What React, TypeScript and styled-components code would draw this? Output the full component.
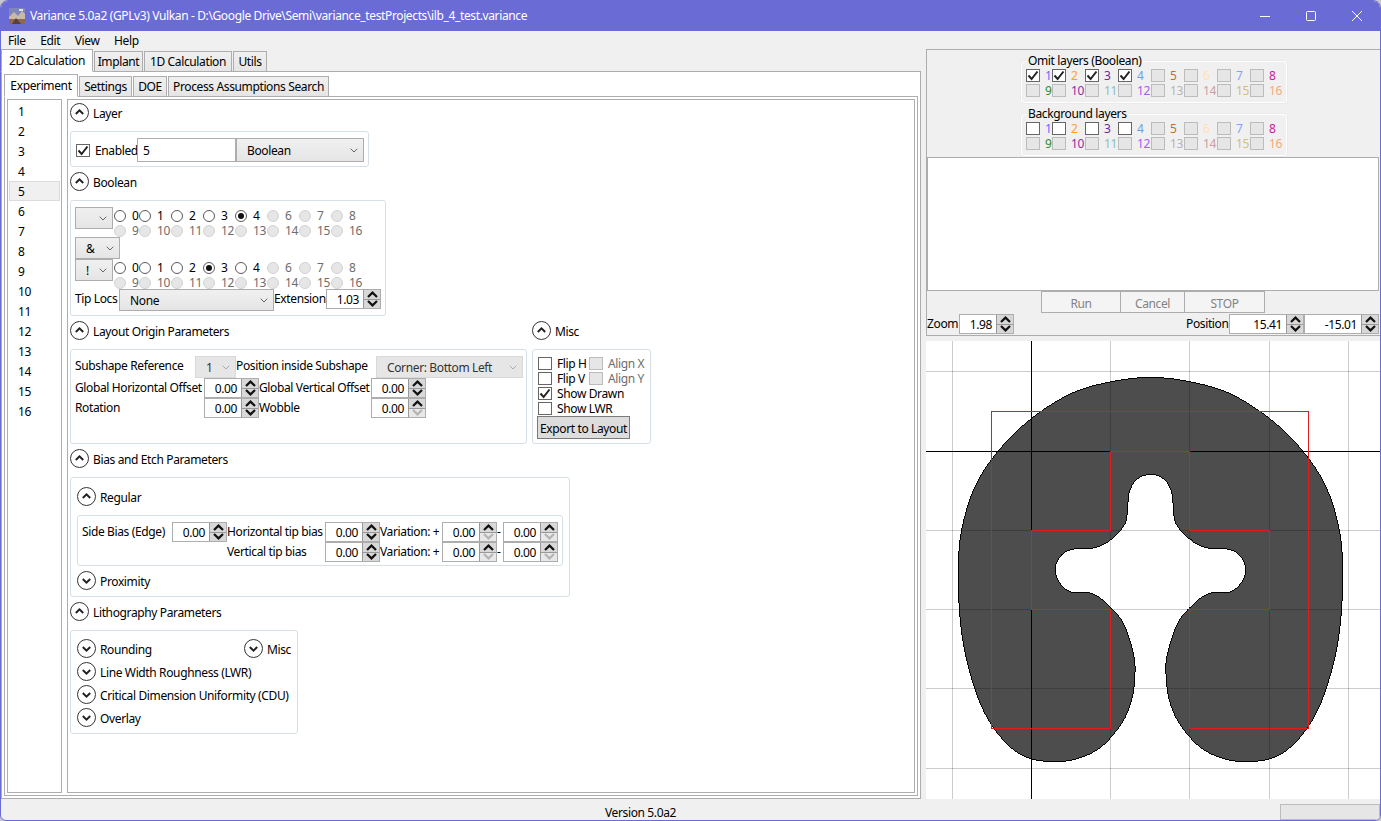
import React from "react";
import styled, { createGlobalStyle } from "styled-components";

const GlobalStyle = createGlobalStyle`
  html, body {
    margin: 0;
    padding: 0;
    background: #c8c8c8;
  }
  * {
    box-sizing: border-box;
  }
`;

const line = "#adadad";
const groupLine = "#d5dfe5";
const face = "#f0f0f0";
const disabledFace = "#e6e6e6";
const muted = "#6d6d6d";

const Window = styled.div`
  width: 1381px;
  height: 821px;
  display: flex;
  flex-direction: column;
  overflow: hidden;
  border: 1px solid #6b6bd6;
  border-radius: 8px 8px 6px 6px;
  background: ${face};
  color: #000;
  font-family: "Noto Sans", "Open Sans", sans-serif;
  font-size: 12px;
  line-height: 15px;
  letter-spacing: -0.37px;
`;

const TitleBar = styled.div`
  height: 30px;
  flex: none;
  display: flex;
  align-items: center;
  padding-left: 8px;
  background: #6b6bd6;
  color: #fff;
`;

const TitleText = styled.span`
  margin: 0 0 1px 5px;
`;

const WindowButtons = styled.div`
  margin-left: auto;
  display: flex;
  height: 100%;
`;

const WindowButton = styled.div`
  width: 46px;
  display: flex;
  align-items: center;
  justify-content: center;
`;

const MenuBar = styled.div`
  height: 18px;
  flex: none;
  display: flex;
  align-items: center;
  gap: 14.5px;
  padding-left: 7px;
`;

const Main = styled.div`
  height: 750px;
  flex: none;
  display: flex;
`;

const LeftColumn = styled.div`
  width: 925px;
  flex: none;
  display: flex;
  flex-direction: column;
  padding-right: 5px;
`;

const TabStrip = styled.div`
  height: 22px;
  flex: none;
  display: flex;
  align-items: flex-end;
  gap: 1px;
  position: relative;
  z-index: 1;
`;

const Tab = styled.div<{ $active?: boolean; $width: number }>`
  width: ${(p) => p.$width}px;
  height: ${(p) => (p.$active ? 23 : 21)}px;
  margin-bottom: -1px;
  display: flex;
  align-items: center;
  justify-content: center;
  border: 1px solid ${line};
  border-bottom-color: ${(p) => (p.$active ? "#fff" : line)};
  background: ${(p) => (p.$active ? "#fff" : "linear-gradient(#f0f0f0, #e5e5e5)")};
`;

const TabBody = styled.div`
  flex: 1;
  min-height: 0;
  display: flex;
  flex-direction: column;
  border: 1px solid ${line};
  background: #fff;
  padding: 2px;
`;

const InnerBody = styled(TabBody)`
  flex-direction: row;
  gap: 5px;
`;

const LayerList = styled.div`
  width: 55px;
  flex: none;
  border: 1px solid ${line};
  padding-top: 1px;
`;

const LayerItem = styled.div<{ $selected?: boolean }>`
  height: 20px;
  width: 51px;
  margin-left: 1px;
  padding-left: 8px;
  display: flex;
  align-items: center;
  border: 1px solid ${(p) => (p.$selected ? "#dcdcdc" : "transparent")};
  background: ${(p) => (p.$selected ? face : "transparent")};
`;

const Panel = styled.div`
  flex: 1;
  display: flex;
  flex-direction: column;
  align-items: flex-start;
  gap: 5px;
  border: 1px solid ${line};
  padding: 3px 0 0 2px;
`;

const Section = styled.div`
  display: flex;
  flex-direction: column;
  align-items: flex-start;
  gap: 9px;
`;

const SectionPair = styled.div`
  display: flex;
  gap: 5px;
`;

const ExpanderRow = styled.div`
  height: 19px;
  display: flex;
  align-items: center;
  gap: 4px;
  white-space: nowrap;
`;

const ExpanderLabel = styled.span`
  padding-top: 1px;
`;

const Group = styled.div<{ $width: number; $height: number }>`
  width: ${(p) => p.$width}px;
  height: ${(p) => p.$height}px;
  flex: none;
  border: 1px solid ${groupLine};
  border-radius: 3px;
`;

const LayerGroup = styled(Group)`
  display: flex;
  align-items: center;
  padding: 2px 4px 0 5px;
`;

const EnabledLabel = styled.span`
  width: 42px;
  margin-left: 5px;
`;

const TextInput = styled.div`
  width: 100px;
  height: 24px;
  display: flex;
  align-items: center;
  padding-left: 5px;
  border: 1px solid ${line};
  background: #fff;
`;

const DropdownBox = styled.div<{ $width: number; $disabled?: boolean; $height?: number }>`
  width: ${(p) => p.$width}px;
  height: ${(p) => p.$height ?? 22}px;
  flex: none;
  display: flex;
  align-items: center;
  justify-content: space-between;
  padding: 0 5px 0 10px;
  border: 1px solid ${(p) => (p.$disabled ? "#d9d9d9" : line)};
  background: ${(p) => (p.$disabled ? disabledFace : "linear-gradient(#f0f0f0, #e5e5e5)")};
  color: ${(p) => (p.$disabled ? "#333" : "#000")};
`;

const BooleanGroup = styled(Group)`
  display: flex;
  flex-direction: column;
  align-items: flex-start;
  padding: 6px 0 0 4px;
`;

const BooleanRow = styled.div`
  display: flex;
  align-items: flex-start;
  height: 30px;
`;

const RadioGrid = styled.div`
  display: grid;
  margin: 1px 0 0 1px;
  grid-template-columns: 25px repeat(7, 32px);
  grid-auto-rows: 15px;
`;

const RadioCell = styled.div<{ $disabled?: boolean }>`
  display: flex;
  align-items: center;
  gap: 6px;
  color: ${(p) => (p.$disabled ? muted : "#000")};
`;

const RadioDot = styled.span<{ $disabled?: boolean; $checked?: boolean }>`
  width: 12px;
  height: 12px;
  flex: none;
  display: flex;
  align-items: center;
  justify-content: center;
  border: 1px solid ${(p) => (p.$disabled ? "#d2d2d2" : "#5a5a5a")};
  border-radius: 50%;
  background: ${(p) => (p.$disabled ? disabledFace : "#fff")};
  &::after {
    content: "";
    display: ${(p) => (p.$checked ? "block" : "none")};
    width: 6px;
    height: 6px;
    border-radius: 50%;
    background: #111;
  }
`;

const FieldRow = styled.div`
  display: flex;
  align-items: flex-start;
`;

const FieldLabel = styled.span<{ $width: number }>`
  width: ${(p) => p.$width}px;
  flex: none;
  height: 18px;
  display: flex;
  align-items: center;
  white-space: nowrap;
`;

const TipRow = styled(FieldRow)`
  height: 22px;
`;

const LayoutGroup = styled(Group)`
  padding: 6px 0 0 4px;
`;

const StepperBox = styled.div<{ $width?: number }>`
  width: ${(p) => p.$width ?? 55}px;
  height: 20px;
  flex: none;
  display: flex;
  border: 1px solid ${line};
  background: #fff;
`;

const StepperValue = styled.div`
  flex: 1;
  display: flex;
  align-items: center;
  justify-content: flex-end;
  padding: 1px 4px 0 0;
`;

const StepperButtons = styled.div`
  width: 17px;
  flex: none;
  display: flex;
  flex-direction: column;
  border-left: 1px solid #999;
`;

const StepperButton = styled.div<{ $disabled?: boolean }>`
  flex: 1;
  display: flex;
  align-items: center;
  justify-content: center;
  background: ${(p) => (p.$disabled ? "#e8e8e8" : "#d8d8d8")};
  color: ${(p) => (p.$disabled ? "#b5b5b5" : "#111")};
  & + & {
    border-top: 1px solid #999;
  }
`;

const MiscGroup = styled(Group)`
  display: flex;
  flex-direction: column;
  align-items: flex-start;
  padding: 6px 0 0 5px;
`;

const CheckRow = styled.div`
  height: 15px;
  display: flex;
  align-items: center;
`;

const CheckLabel = styled.span<{ $width?: number; $disabled?: boolean; $color?: string }>`
  width: ${(p) => (p.$width ? `${p.$width}px` : "auto")};
  margin-left: 5px;
  white-space: nowrap;
  color: ${(p) => p.$color ?? (p.$disabled ? muted : "#000")};
`;

const CheckBoxFrame = styled.span<{ $disabled?: boolean }>`
  width: 14px;
  height: 13px;
  flex: none;
  display: flex;
  align-items: center;
  justify-content: center;
  border: 1px solid ${(p) => (p.$disabled ? "#bcbcbc" : "#666")};
  background: ${(p) => (p.$disabled ? disabledFace : "#fff")};
`;

const ExportButton = styled.div`
  width: 93px;
  height: 23px;
  margin-left: -1px;
  padding-top: 1px;
  display: flex;
  align-items: center;
  justify-content: center;
  border: 1px solid #7a7a7a;
  background: #dddddd;
`;

const BiasGroup = styled(Group)`
  display: flex;
  flex-direction: column;
  align-items: flex-start;
  gap: 9px;
  padding: 9px 0 0 6px;
`;

const RegularGroup = styled(Group)`
  padding: 6px 0 0 4px;
  margin-bottom: -4px;
`;

const LithoGroup = styled(Group)`
  display: flex;
  flex-direction: column;
  gap: 4px;
  padding: 8px 6px 0 6px;
`;

const LithoRow = styled.div`
  display: flex;
  justify-content: space-between;
`;

const RightColumn = styled.div`
  flex: 1;
  display: flex;
  flex-direction: column;
  gap: 5px;
  min-width: 0;
`;

const ControlPanel = styled.div`
  height: 287px;
  flex: none;
  display: flex;
  flex-direction: column;
  border-top: 1px solid ${line};
  border-left: 1px solid ${line};
  border-bottom: 1px solid ${line};
`;

const LayerChooser = styled(Group)`
  position: relative;
  margin: 11px 0 0 94px;
  padding: 6px 0 0 4px;
  border-color: #fff;
  box-shadow: 0 0 0 0.5px #dfe5ea;
`;

const ChooserTitle = styled.span`
  position: absolute;
  top: -9px;
  left: 4px;
  padding: 0 2px;
  background: ${face};
`;

const ChooserGrid = styled.div`
  display: grid;
  grid-template-columns: 26px repeat(7, 33px);
  grid-auto-rows: 15px;
`;

const ChooserCell = styled.div`
  display: flex;
  align-items: center;
  & > span:last-child {
    margin-left: 5px;
  }
`;

const ResultBox = styled.div`
  height: 134px;
  flex: none;
  margin: 1px 1px 0 0;
  border: 1px solid ${line};
  background: #fff;
`;

const ActionRow = styled.div`
  height: 22px;
  flex: none;
  display: flex;
  padding-left: 114px;
`;

const ActionButton = styled.div<{ $width: number }>`
  width: ${(p) => p.$width}px;
  display: flex;
  align-items: center;
  justify-content: center;
  padding-top: 2px;
  border: 1px solid ${line};
  background: #f4f4f4;
  color: #838383;
  & + & {
    border-left: none;
  }
`;

const ViewRow = styled.div`
  height: 20px;
  flex: none;
  margin-top: 1px;
  display: flex;
  align-items: flex-start;
  padding-right: 1px;
`;

const PositionLabel = styled(FieldLabel)`
  margin-left: auto;
`;

const Viewport = styled.div`
  height: 458px;
  flex: none;
  background: #fff;
  & > svg {
    display: block;
  }
`;

const StatusBar = styled.div`
  flex: 1;
  display: flex;
  align-items: flex-end;
`;

const StatusText = styled.div`
  flex: 1;
  height: 100%;
  padding-top: 6px;
  text-align: center;
`;

const ProgressBar = styled.div`
  width: 100px;
  height: 16px;
  border: 1px solid #bcbcbc;
  background: ${disabledFace};
`;

const Chevron = ({ color = "#666" }: { color?: string }) => (
  <svg width="8" height="5" viewBox="0 0 8 5">
    <path d="M0.7 0.7 L4 4 L7.3 0.7" fill="none" stroke={color} strokeWidth="1" />
  </svg>
);

const Dropdown = ({ width, value, disabled, height }: { width: number; value?: string; disabled?: boolean; height?: number }) => (
  <DropdownBox $width={width} $disabled={disabled} $height={height}>
    <span>{value}</span>
    <Chevron color={disabled ? "#aaa" : "#666"} />
  </DropdownBox>
);

const Expander = ({ label, open }: { label: string; open?: boolean }) => (
  <ExpanderRow>
    <svg width="19" height="19" viewBox="0 0 19 19">
      <circle cx="9.5" cy="9.5" r="9" fill="#fff" stroke="#333" />
      <path d={open ? "M5.8 11 L9.5 7.4 L13.2 11" : "M5.8 8 L9.5 11.6 L13.2 8"} fill="none" stroke="#222" strokeWidth="2" />
    </svg>
    <ExpanderLabel>{label}</ExpanderLabel>
  </ExpanderRow>
);

const CheckBox = ({ checked, disabled }: { checked?: boolean; disabled?: boolean }) => (
  <CheckBoxFrame $disabled={disabled}>
    {checked && (
      <svg width="12" height="11" viewBox="0 0 12 11">
        <path d="M1.5 5.5 L4.6 9 L10.5 1.5" fill="none" stroke="#222" strokeWidth="2" />
      </svg>
    )}
  </CheckBoxFrame>
);

const Stepper = ({ value, width, downDisabled }: { value: string; width?: number; downDisabled?: boolean }) => (
  <StepperBox $width={width}>
    <StepperValue>{value}</StepperValue>
    <StepperButtons>
      <StepperButton>
        <svg width="11" height="7" viewBox="0 0 11 7">
          <path d="M1 6 L5.5 1.6 L10 6" fill="none" stroke="currentColor" strokeWidth="2.2" />
        </svg>
      </StepperButton>
      <StepperButton $disabled={downDisabled}>
        <svg width="11" height="7" viewBox="0 0 11 7">
          <path d="M1 1 L5.5 5.4 L10 1" fill="none" stroke="currentColor" strokeWidth="2.2" />
        </svg>
      </StepperButton>
    </StepperButtons>
  </StepperBox>
);

const topLayers = ["0", "1", "2", "3", "4", "6", "7", "8"];
const bottomLayers = ["9", "10", "11", "12", "13", "14", "15", "16"];

const RadioBlock = ({ selected }: { selected: string }) => (
  <RadioGrid>
    {topLayers.map((n, i) => (
      <RadioCell key={n} $disabled={i > 4}>
        <RadioDot $disabled={i > 4} $checked={n === selected} />
        {n}
      </RadioCell>
    ))}
    {bottomLayers.map((n) => (
      <RadioCell key={n} $disabled>
        <RadioDot $disabled />
        {n}
      </RadioCell>
    ))}
  </RadioGrid>
);

const layerColors = [
  "#6a6aff", "#ffa31f", "#6f1fa0", "#6f9fe8", "#d2691e", "#ffe2b8", "#7fa6f0", "#cc1a99",
  "#2e8b2e", "#8b2ea0", "#8fbcbc", "#a060f0", "#bcb0b0", "#c8a0a0", "#d4c070", "#f4a878",
];

const LayerChooserBlock = ({ title, checked }: { title: string; checked: boolean }) => (
  <LayerChooser $width={266} $height={42}>
    <ChooserTitle>{title}</ChooserTitle>
    <ChooserGrid>
      {layerColors.map((color, i) => (
        <ChooserCell key={i}>
          <CheckBox checked={checked && i < 4} disabled={i >= 4} />
          <CheckLabel $color={color}>{i + 1}</CheckLabel>
        </ChooserCell>
      ))}
    </ChooserGrid>
  </LayerChooser>
);

// left half of the shape, traced from the picture in 3x units; the right half mirrors it
const leftSide: [number, number][] = [
  [635, 418], [612, 460], [607, 520], [595, 560], [550, 605], [500, 625], [440, 628], [405, 650], [390, 690],
  [405, 730], [440, 757], [500, 760], [550, 795], [595, 850], [625, 940], [630, 1000], [620, 1080], [590, 1150],
  [530, 1220], [460, 1255], [385, 1265], [300, 1250], [230, 1195], [170, 1100], [125, 960], [105, 830], [100, 690],
  [110, 570], [150, 440], [222, 330], [320, 235], [440, 160], [560, 125],
];

const mirrored = [...leftSide].reverse().map(([x, y]): [number, number] => [1353 - x, y]);
const outline: [number, number][] = [[677, 112], ...mirrored, [677, 403], ...leftSide];

const smoothPath = (pts: [number, number][]) => {
  const n = pts.length;
  let d = `M${pts[0][0]} ${pts[0][1]}`;
  for (let i = 0; i < n; i++) {
    const [p0, p1, p2, p3] = [pts[(i - 1 + n) % n], pts[i], pts[(i + 1) % n], pts[(i + 2) % n]];
    const c1 = [p1[0] + (p2[0] - p0[0]) / 6, p1[1] + (p2[1] - p0[1]) / 6];
    const c2 = [p2[0] - (p3[0] - p1[0]) / 6, p2[1] - (p3[1] - p1[1]) / 6];
    d += `C${c1[0]} ${c1[1]} ${c2[0]} ${c2[1]} ${p2[0]} ${p2[1]}`;
  }
  return d + "Z";
};

// zoomed picture units to viewport pixel centres
const px = (z: number) => Math.round(z / 3 - 1) + 0.5;

const drawnLayer = [
  [199, 214], [1150, 214], [1150, 1165], [793, 1165], [793, 808], [1033, 808], [1033, 571], [793, 571],
  [793, 333], [556, 333], [556, 571], [319, 571], [319, 808], [556, 808], [556, 1165], [199, 1165],
]
  .map(([x, y]) => `${px(x)},${px(y)}`)
  .join(" ");

const LayoutView = () => (
  <svg width="454" height="458" viewBox="0 0 454 458" shapeRendering="crispEdges">
    <g transform="translate(-1 -1) scale(0.3333)">
      <path d={smoothPath(outline)} fill="#4d4d4d" stroke="#000" strokeWidth="3" />
    </g>
    <g stroke="#000" strokeOpacity="0.2">
      {[82, 556, 793, 1033, 1270].map((x) => (
        <line key={x} x1={px(x)} x2={px(x)} y1={0} y2={458} />
      ))}
      {[94, 571, 808, 1045, 1285].map((y) => (
        <line key={y} x1={0} x2={454} y1={px(y)} y2={px(y)} />
      ))}
    </g>
    <line x1={px(319)} x2={px(319)} y1="0" y2="458" stroke="#000" />
    <line x1="0" x2="454" y1={px(333)} y2={px(333)} stroke="#000" />
    <polygon points={drawnLayer} fill="none" stroke="#e21a1a" />
  </svg>
);

const AppIcon = () => (
  <svg width="16" height="16" viewBox="0 0 16 16">
    <rect width="16" height="16" fill="#7f86b8" />
    <rect y="9" width="16" height="7" fill="#8a6a55" />
    <path d="M0 9 L5 4 L9 8 L13 3 L16 6 V11 H0Z" fill="#c9b9a8" />
    <path d="M3 16 L7 10 L12 16Z" fill="#5a3f35" />
    <rect x="10" y="1" width="4" height="2" fill="#e4e0ea" />
  </svg>
);

export default function App() {
  return (
    <>
      <GlobalStyle />
      <Window>
        <TitleBar>
          <AppIcon />
          <TitleText>
            Variance 5.0a2 (GPLv3) Vulkan - D:\Google Drive\Semi\variance_testProjects\ilb_4_test.variance
          </TitleText>
          <WindowButtons>
            <WindowButton>
              <svg width="10" height="10" viewBox="0 0 10 10">
                <path d="M0 5.5H10" stroke="#fff" />
              </svg>
            </WindowButton>
            <WindowButton>
              <svg width="10" height="10" viewBox="0 0 10 10">
                <rect x="0.5" y="0.5" width="9" height="9" rx="1" fill="none" stroke="#fff" />
              </svg>
            </WindowButton>
            <WindowButton>
              <svg width="10" height="10" viewBox="0 0 10 10">
                <path d="M0 0L10 10M10 0L0 10" stroke="#fff" />
              </svg>
            </WindowButton>
          </WindowButtons>
        </TitleBar>
        <MenuBar>
          <span>File</span>
          <span>Edit</span>
          <span>View</span>
          <span>Help</span>
        </MenuBar>
        <Main>
          <LeftColumn>
            <TabStrip>
              <Tab $active $width={92}>2D Calculation</Tab>
              <Tab $width={49}>Implant</Tab>
              <Tab $width={88}>1D Calculation</Tab>
              <Tab $width={34}>Utils</Tab>
            </TabStrip>
            <TabBody>
              <TabStrip>
                <Tab $active $width={74}>Experiment</Tab>
                <Tab $width={53}>Settings</Tab>
                <Tab $width={34}>DOE</Tab>
                <Tab $width={161}>Process Assumptions Search</Tab>
              </TabStrip>
              <InnerBody>
                <LayerList>
                  {Array.from({ length: 16 }, (_, i) => (
                    <LayerItem key={i} $selected={i === 4}>{i + 1}</LayerItem>
                  ))}
                </LayerList>
                <Panel>
                  <Section>
                    <Expander label="Layer" open />
                    <LayerGroup $width={299} $height={36}>
                      <CheckBox checked />
                      <EnabledLabel>Enabled</EnabledLabel>
                      <TextInput>5</TextInput>
                      <Dropdown width={128} height={24} value="Boolean" />
                    </LayerGroup>
                  </Section>
                  <Section>
                    <Expander label="Boolean" open />
                    <BooleanGroup $width={316} $height={116}>
                      <BooleanRow>
                        <Dropdown width={38} />
                        <RadioBlock selected="4" />
                      </BooleanRow>
                      <Dropdown width={45} value="&" />
                      <BooleanRow>
                        <Dropdown width={38} value="!" />
                        <RadioBlock selected="3" />
                      </BooleanRow>
                      <TipRow>
                        <FieldLabel $width={44}>Tip Locs</FieldLabel>
                        <Dropdown width={155} value="None" />
                        <FieldLabel $width={52}>Extension</FieldLabel>
                        <Stepper value="1.03" />
                      </TipRow>
                    </BooleanGroup>
                  </Section>
                  <SectionPair>
                    <Section>
                      <Expander label="Layout Origin Parameters" open />
                      <LayoutGroup $width={457} $height={95}>
                        <FieldRow>
                          <FieldLabel $width={120}>Subshape Reference</FieldLabel>
                          <Dropdown width={41} value="1" disabled />
                          <FieldLabel $width={140}>Position inside Subshape</FieldLabel>
                          <Dropdown width={147} value="Corner: Bottom Left" disabled />
                        </FieldRow>
                        <FieldRow>
                          <FieldLabel $width={129}>Global Horizontal Offset</FieldLabel>
                          <Stepper value="0.00" />
                          <FieldLabel $width={112}>Global Vertical Offset</FieldLabel>
                          <Stepper value="0.00" />
                        </FieldRow>
                        <FieldRow>
                          <FieldLabel $width={129}>Rotation</FieldLabel>
                          <Stepper value="0.00" />
                          <FieldLabel $width={112}>Wobble</FieldLabel>
                          <Stepper value="0.00" downDisabled />
                        </FieldRow>
                      </LayoutGroup>
                    </Section>
                    <Section>
                      <Expander label="Misc" open />
                      <MiscGroup $width={119} $height={95}>
                        <CheckRow>
                          <CheckBox />
                          <CheckLabel $width={32}>Flip H</CheckLabel>
                          <CheckBox disabled />
                          <CheckLabel $disabled>Align X</CheckLabel>
                        </CheckRow>
                        <CheckRow>
                          <CheckBox />
                          <CheckLabel $width={32}>Flip V</CheckLabel>
                          <CheckBox disabled />
                          <CheckLabel $disabled>Align Y</CheckLabel>
                        </CheckRow>
                        <CheckRow>
                          <CheckBox checked />
                          <CheckLabel>Show Drawn</CheckLabel>
                        </CheckRow>
                        <CheckRow>
                          <CheckBox />
                          <CheckLabel>Show LWR</CheckLabel>
                        </CheckRow>
                        <ExportButton>Export to Layout</ExportButton>
                      </MiscGroup>
                    </Section>
                  </SectionPair>
                  <Section>
                    <Expander label="Bias and Etch Parameters" open />
                    <BiasGroup $width={500} $height={120}>
                      <Expander label="Regular" open />
                      <RegularGroup $width={486} $height={51}>
                        <FieldRow>
                          <FieldLabel $width={90}>Side Bias (Edge)</FieldLabel>
                          <Stepper value="0.00" />
                          <FieldLabel $width={98}>Horizontal tip bias</FieldLabel>
                          <Stepper value="0.00" />
                          <FieldLabel $width={62}>Variation: +</FieldLabel>
                          <Stepper value="0.00" downDisabled />
                          <FieldLabel $width={6}>-</FieldLabel>
                          <Stepper value="0.00" downDisabled />
                        </FieldRow>
                        <FieldRow>
                          <FieldLabel $width={145} />
                          <FieldLabel $width={98}>Vertical tip bias</FieldLabel>
                          <Stepper value="0.00" />
                          <FieldLabel $width={62}>Variation: +</FieldLabel>
                          <Stepper value="0.00" downDisabled />
                          <FieldLabel $width={6}>-</FieldLabel>
                          <Stepper value="0.00" downDisabled />
                        </FieldRow>
                      </RegularGroup>
                      <Expander label="Proximity" />
                    </BiasGroup>
                  </Section>
                  <Section>
                    <Expander label="Lithography Parameters" open />
                    <LithoGroup $width={228} $height={104}>
                      <LithoRow>
                        <Expander label="Rounding" />
                        <Expander label="Misc" />
                      </LithoRow>
                      <Expander label="Line Width Roughness (LWR)" />
                      <Expander label="Critical Dimension Uniformity (CDU)" />
                      <Expander label="Overlay" />
                    </LithoGroup>
                  </Section>
                </Panel>
              </InnerBody>
            </TabBody>
          </LeftColumn>
          <RightColumn>
            <ControlPanel>
              <LayerChooserBlock title="Omit layers (Boolean)" checked />
              <LayerChooserBlock title="Background layers" checked={false} />
              <ResultBox />
              <ActionRow>
                <ActionButton $width={80}>Run</ActionButton>
                <ActionButton $width={64}>Cancel</ActionButton>
                <ActionButton $width={80}>STOP</ActionButton>
              </ActionRow>
              <ViewRow>
                <FieldLabel $width={32}>Zoom</FieldLabel>
                <Stepper value="1.98" />
                <PositionLabel $width={43}>Position</PositionLabel>
                <Stepper value="15.41" width={75} />
                <Stepper value="-15.01" width={75} />
              </ViewRow>
            </ControlPanel>
            <Viewport>
              <LayoutView />
            </Viewport>
          </RightColumn>
        </Main>
        <StatusBar>
          <StatusText>Version 5.0a2</StatusText>
          <ProgressBar />
        </StatusBar>
      </Window>
    </>
  );
}
